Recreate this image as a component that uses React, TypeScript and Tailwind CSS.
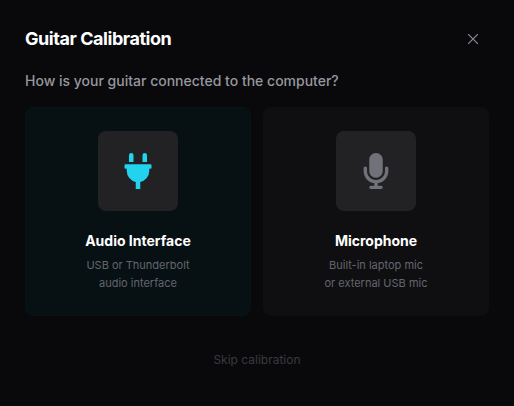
import React, { useState } from 'react';
import { X } from 'lucide-react';
import { FaPlug } from 'react-icons/fa';
import { FaMicrophone } from 'react-icons/fa6';
import clsx from 'clsx';

type Source = 'interface' | 'microphone';

interface SourceOption {
  id: Source;
  title: string;
  lines: [string, string];
  icon: React.ComponentType<{ className?: string }>;
}

const OPTIONS: SourceOption[] = [
  {
    id: 'interface',
    title: 'Audio Interface',
    lines: ['USB or Thunderbolt', 'audio interface'],
    icon: FaPlug,
  },
  {
    id: 'microphone',
    title: 'Microphone',
    lines: ['Built-in laptop mic', 'or external USB mic'],
    icon: FaMicrophone,
  },
];

interface SourceCardProps {
  option: SourceOption;
  selected: boolean;
  onSelect: (id: Source) => void;
}

function SourceCard({ option, selected, onSelect }: SourceCardProps) {
  const Icon = option.icon;

  return (
    <button
      type="button"
      aria-pressed={selected}
      onClick={() => onSelect(option.id)}
      className={clsx(
        'flex flex-col items-center rounded-lg border px-4 py-[23px] text-center',
        selected ? 'border-[#071414] bg-[#071113]' : 'border-[#0f0f12] bg-[#0f0f11]',
      )}
    >
      <span className="flex size-20 items-center justify-center rounded-lg bg-[#222225]">
        <Icon className={clsx('size-9', selected ? 'text-[#22d3ee]' : 'text-[#71717a]')} />
      </span>
      <span className="mt-5 text-[14px] leading-5 font-bold text-white">{option.title}</span>
      <span className="mt-[5px] text-[11px] leading-[18px] text-[#65656e]">
        {option.lines[0]}
        <br />
        {option.lines[1]}
      </span>
    </button>
  );
}

export default function App() {
  const [source, setSource] = useState<Source>('interface');

  return (
    <main className="min-h-screen bg-[#09090b] px-[25px] py-[23px] font-['Inter',sans-serif]">
      <header className="flex items-center justify-between">
        <h2 className="text-[18px] leading-7 font-bold tracking-tight text-white">Guitar Calibration</h2>
        <button type="button" aria-label="Close" className="flex size-8 items-center justify-center text-[#84848c]">
          <X size={18} strokeWidth={1.5} />
        </button>
      </header>

      <p className="mt-4 text-[14px] leading-5 font-medium text-[#97979f]">
        How is your guitar connected to the computer?
      </p>

      <div className="mt-4 grid grid-cols-2 gap-3">
        {OPTIONS.map((option) => (
          <SourceCard key={option.id} option={option} selected={source === option.id} onSelect={setSource} />
        ))}
      </div>

      <div className="mt-[26px] flex justify-center">
        <button type="button" className="px-4 py-2 text-[12px] leading-5 text-[#39393f]">
          Skip calibration
        </button>
      </div>
    </main>
  );
}
